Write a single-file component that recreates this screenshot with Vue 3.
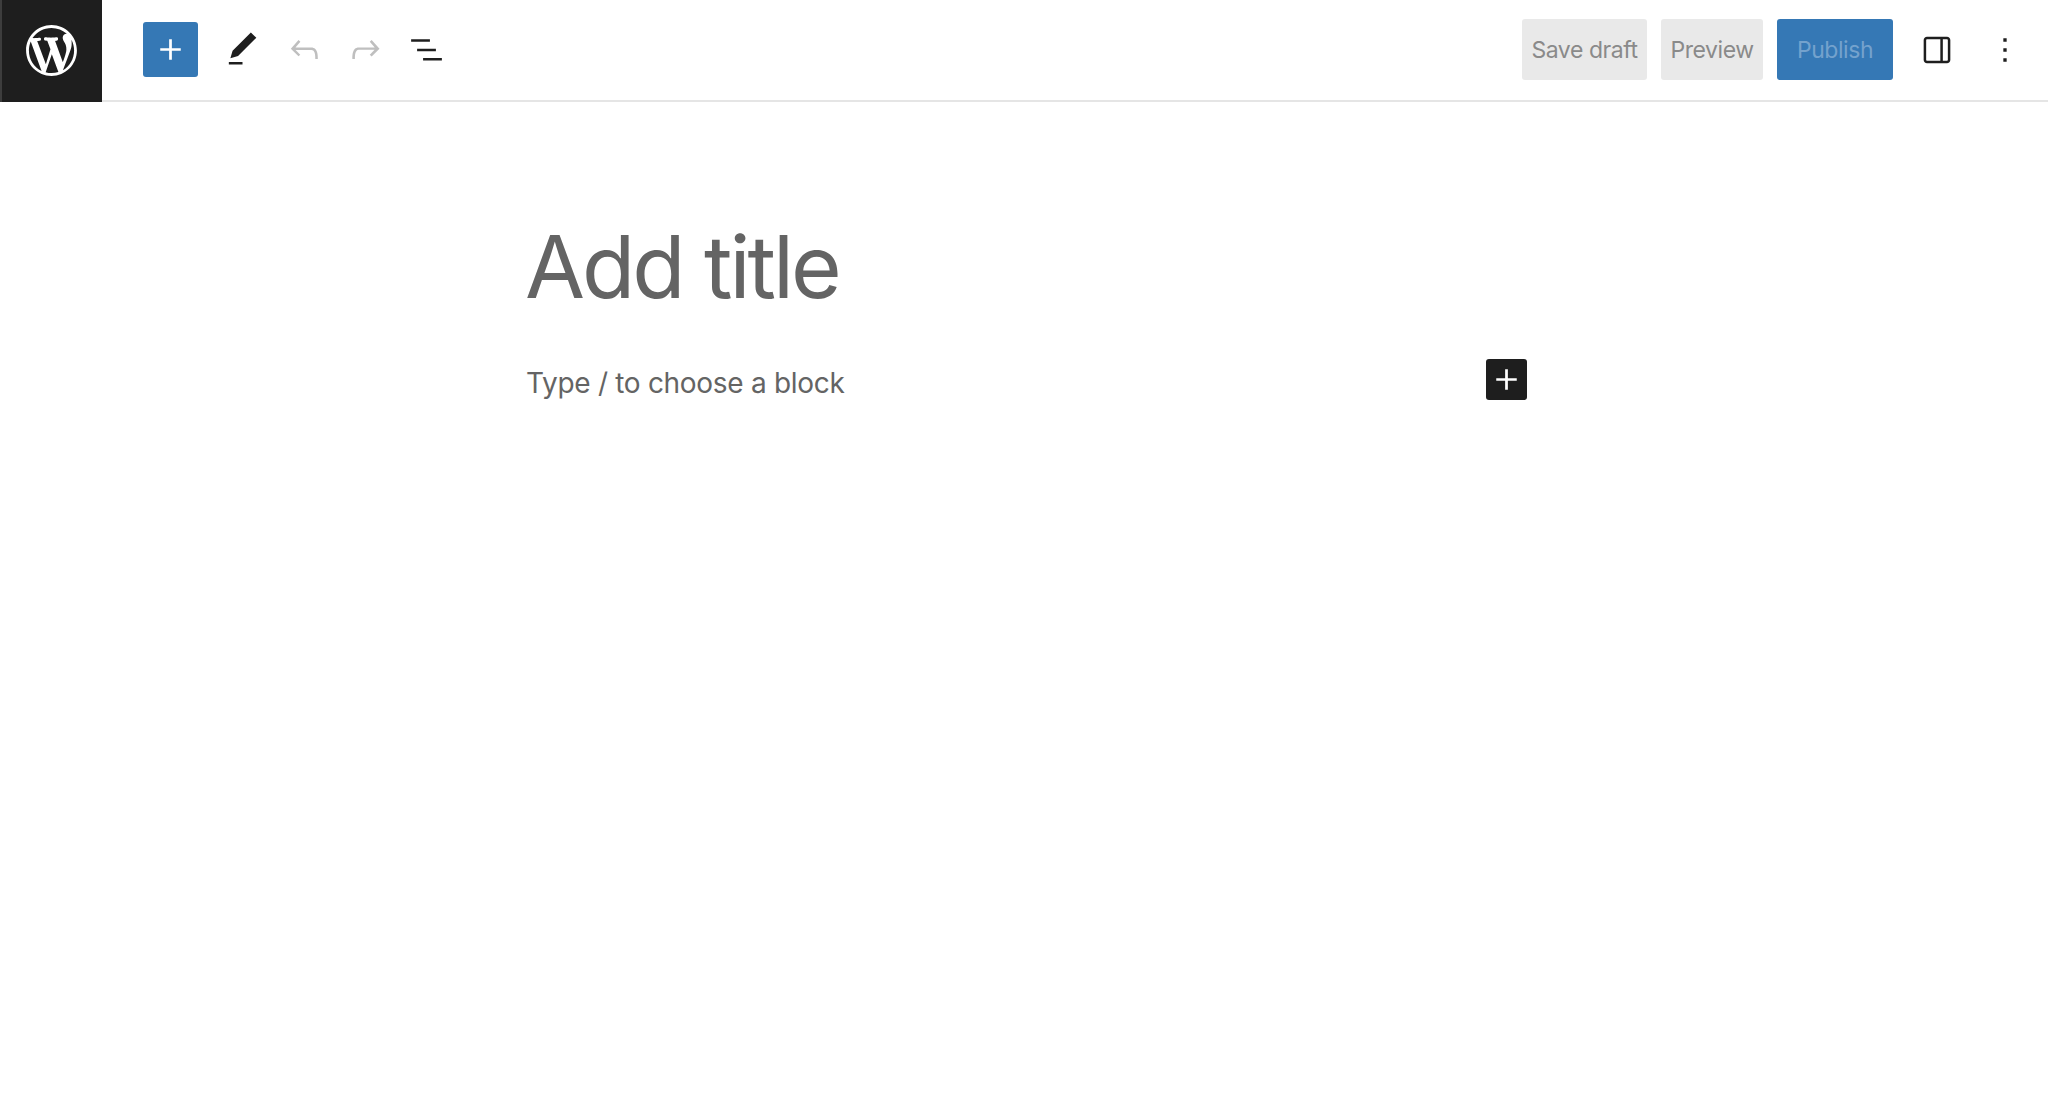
<template>
  <div class="editor">
    <header class="topbar">
      <a class="site-logo" aria-label="View Posts">
        <svg viewBox="-2 -2 24 24" width="61" height="61" fill="#fff">
          <path d="M20 10c0-5.51-4.49-10-10-10C4.48 0 0 4.49 0 10c0 5.52 4.48 10 10 10 5.51 0 10-4.48 10-10zM7.78 15.37L4.37 6.22c.55-.02 1.17-.08 1.17-.08.5-.06.44-1.13-.06-1.11 0 0-1.45.11-2.37.11-.18 0-.37 0-.58-.01C4.12 2.69 6.87 1.11 10 1.11c2.33 0 4.45.87 6.05 2.34-.68-.11-1.65.39-1.65 1.58 0 .74.45 1.36.9 2.1.35.61.55 1.36.55 2.46 0 1.49-1.4 5-1.4 5l-3.03-8.37c.54-.02.82-.17.82-.17.5-.05.44-1.25-.06-1.22 0 0-1.44.12-2.38.12-.87 0-2.33-.12-2.33-.12-.5-.03-.56 1.2-.06 1.22l.92.08 1.26 3.41zM17.41 10c.24-.64.74-1.87.43-4.25.7 1.29 1.05 2.71 1.05 4.25 0 3.29-1.73 6.24-4.4 7.78.97-2.59 1.94-5.2 2.92-7.78zM6.1 18.09C3.12 16.65 1.11 13.53 1.11 10c0-1.3.23-2.48.72-3.59C3.25 10.3 4.67 14.2 6.1 18.09zm4.03-6.63l2.58 6.98c-.86.29-1.76.45-2.71.45-.79 0-1.57-.11-2.29-.33.81-2.38 1.62-4.74 2.42-7.1z" />
        </svg>
      </a>

      <div class="tools">
        <button type="button" class="inserter" aria-label="Toggle block inserter">
          <svg viewBox="0 0 24 24" width="41" height="41" fill="#fff"><path :d="icons.plus" /></svg>
        </button>
        <button
          v-for="tool in tools"
          :key="tool.name"
          type="button"
          class="icon-btn"
          :class="{ muted: tool.disabled }"
          :aria-label="tool.name"
        >
          <svg viewBox="0 0 24 24" width="41" height="41" fill="currentColor"><path :d="tool.path" /></svg>
        </button>
      </div>

      <div class="actions">
        <button type="button" class="btn btn-grey save">Save draft</button>
        <button type="button" class="btn btn-grey preview">Preview</button>
        <button type="button" class="btn btn-publish">Publish</button>
        <button type="button" class="icon-btn drawer" aria-label="Settings">
          <svg viewBox="0 0 24 24" width="40" height="40" fill="currentColor"><path :d="icons.drawer" /></svg>
        </button>
        <button type="button" class="icon-btn more" aria-label="Options">
          <svg viewBox="0 0 24 24" width="40" height="40" fill="currentColor"><path :d="icons.more" /></svg>
        </button>
      </div>
    </header>

    <main class="canvas">
      <h1 class="title">Add title</h1>
      <div class="para-row">
        <p class="para">Type / to choose a block</p>
        <button type="button" class="block-plus" aria-label="Add block">
          <svg viewBox="0 0 24 24" width="41" height="41" fill="#fff"><path :d="icons.plus" /></svg>
        </button>
      </div>
    </main>
  </div>
</template>

<script setup>
const icons = {
  plus: 'M18 11.2h-5.2V6h-1.6v5.2H6v1.6h5.2V18h1.6v-5.2H18z',
  pencil: 'M20.1 5.1L16.9 2 6.2 12.7l-1.3 4.4 4.5-1.3L20.1 5.1zM4 20.8h8v-1.5H4v1.5z',
  undo: 'M18.3 11.7c-.6-.6-1.4-.9-2.3-.9H6.7l2.9-3.3-1.1-1-4.5 5L8.5 16l1-1-2.7-2.7H16c.5 0 .9.2 1.3.5 1 1 1 3.4 1 4.5v.3h1.5v-.2c0-1.5 0-4.3-1.5-5.7z',
  redo: 'M15.6 6.5l-1.1 1 2.9 3.3H8c-.9 0-1.7.3-2.3.9-1.4 1.5-1.4 4.2-1.4 5.6v.2h1.5v-.3c0-1.1 0-3.5 1-4.5.3-.3.7-.5 1.3-.5h9.2L14.5 15l1.1 1.1 4.6-4.6-4.6-5z',
  list: 'M3 6h11v1.5H3V6zm3.5 5.5h11V13h-11v-1.5zM21 17H10v1.5h11V17z',
  drawer: 'M18 4H6c-1.1 0-2 .9-2 2v12c0 1.1.9 2 2 2h12c1.1 0 2-.9 2-2V6c0-1.1-.9-2-2-2zM14 18.500H6c-.3 0-.5-.2-.5-.5V6c0-.3.2-.5.5-.5h8v13zm4.500-.5c0 .3-.2.5-.5.5h-2.500V5.500H18c.3 0 .5.2.5.5v12z',
  more: 'M13 19h-2v-2h2v2zm0-6h-2v-2h2v2zm0-6h-2V5h2v2z'
}

const tools = [
  { name: 'Tools', path: icons.pencil },
  { name: 'Undo', path: icons.undo, disabled: true },
  { name: 'Redo', path: icons.redo, disabled: true },
  { name: 'Document Overview', path: icons.list }
]
</script>

<style>
html,
body {
  margin: 0;
  background: #fff;
}
</style>

<style scoped>
.editor {
  min-height: 1116px;
  background: #fff;
  font-family: Inter, "Liberation Sans", sans-serif;
  color: #1e1e1e;
}

button {
  border: none;
  background: none;
  padding: 0;
  font-family: inherit;
  cursor: pointer;
}

svg {
  display: block;
}

.topbar {
  display: flex;
  align-items: center;
  height: 99px;
  padding-bottom: 1px;
  border-bottom: 2px solid #e5e5e5;
}

.site-logo {
  display: flex;
  align-items: center;
  justify-content: center;
  align-self: flex-start;
  width: 100px;
  height: 102px;
  flex: none;
  background: #1e1e1e;
  border-left: 2px solid #3d3d3d;
}

.site-logo svg {
  margin: -1px 0 0 -2px;
}

.tools {
  display: flex;
  align-items: center;
  margin-left: 41px;
  gap: 20px;
}

.inserter {
  display: flex;
  align-items: center;
  justify-content: center;
  width: 55px;
  height: 55px;
  border-radius: 3px;
  background: #3578b5;
}

.icon-btn {
  display: block;
  color: #1e1e1e;
}

.inserter + .icon-btn {
  margin: 0 1px 0 4px;
}

.icon-btn.muted {
  color: #bfbfbf;
}

.actions {
  display: flex;
  align-items: center;
  margin-left: auto;
}

.btn {
  height: 61px;
  padding-top: 2px;
  border-radius: 3px;
  font-size: 23px;
  letter-spacing: -0.45px;
  line-height: 59px;
}

.btn-grey {
  background: #e9e9e9;
  color: #8a8a8a;
}

.save {
  width: 125px;
}

.preview {
  width: 102px;
  margin-left: 14px;
}

.btn-publish {
  width: 116px;
  margin-left: 14px;
  background: #3578b5;
  color: #74a2cd;
}

.drawer {
  margin-left: 24px;
}

.more {
  margin-left: 28px;
  margin-right: 23px;
}

.canvas {
  width: 1000px;
  margin-left: 527px;
}

.title {
  margin: 0 0 0 -2px;
  padding-top: 113px;
  font-size: 87px;
  font-weight: 400;
  letter-spacing: -3px;
  line-height: 1.2;
  color: #646464;
}

.para-row {
  display: flex;
  align-items: flex-start;
  justify-content: space-between;
  margin-top: 41px;
}

.para {
  margin: 0 0 0 -1px;
  font-size: 28px;
  letter-spacing: -0.3px;
  line-height: 46px;
  color: #646464;
}

.block-plus {
  display: flex;
  align-items: center;
  justify-content: center;
  width: 41px;
  height: 41px;
  border-radius: 3px;
  background: #1e1e1e;
  margin-top: -1px;
}
</style>
